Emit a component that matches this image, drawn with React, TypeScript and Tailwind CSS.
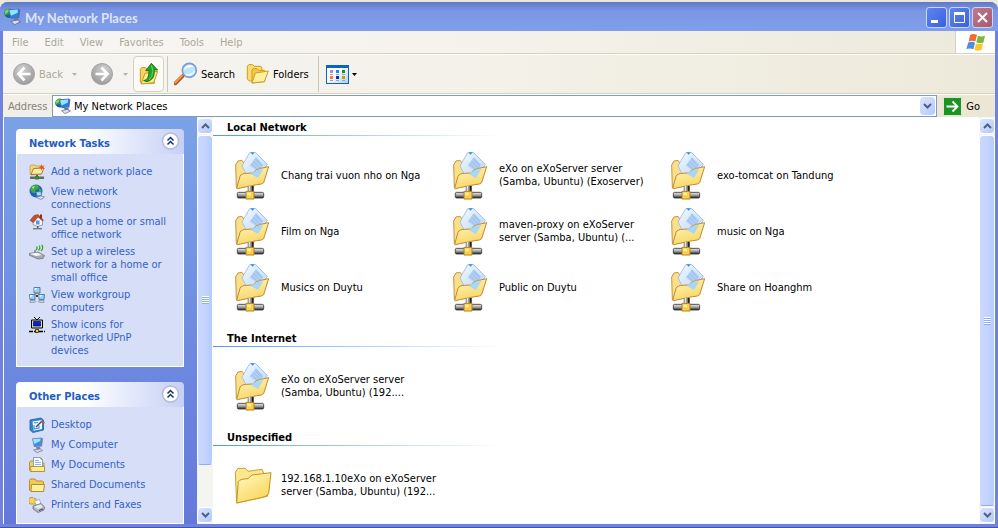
import type { ReactNode } from "react";

/* ---------- small glyphs ---------- */

function NetworkGlobe({ size = 16 }: { size?: number }) {
  return (
    <svg width={size} height={size} viewBox="0 0 16 16" aria-hidden="true">
      <circle cx="4.5" cy="5" r="4.4" fill="#2f9a3c" />
      <path d="M1 3 Q3 1 5 1 L4 4 L1 6Z" fill="#7fd36a" />
      <path d="M1 7 L5 6 L6 9.5 Q3 9.5 1 7Z" fill="#1c55c0" />
      <path d="M4 1.5 L13.5 .6 L15.4 1.6 L14.4 9.4 L6.6 10.2Z" fill="#4f6cb8" />
      <path d="M5 2.2 L13 1.4 L12.8 8.4 L7.2 9.1Z" fill="#1f83f0" />
      <path d="M5 2.2 L13 1.4 L12.9 4.4 L6.6 7.4Z" fill="#8fe4ff" />
      <path d="M9 10 L13 9.5 L14 12 L10 12.6Z" fill="#6e7492" />
      <path d="M6.5 12.6 L12.5 11.4 L15.5 13 L10 15.6Z" fill="#dde2ee" stroke="#5b6480" strokeWidth=".7" />
    </svg>
  );
}

function Circle({ flip }: { flip?: boolean }) {
  return (
    <svg width="24" height="24" viewBox="0 0 24 24" className={flip ? "-scale-x-100" : ""} aria-hidden="true">
      <defs>
        <radialGradient id="disc" cx=".4" cy=".3" r=".8">
          <stop offset="0" stopColor="#d2d2d2" />
          <stop offset="1" stopColor="#949494" />
        </radialGradient>
      </defs>
      <circle cx="12" cy="12" r="10.5" fill="url(#disc)" stroke="#a3a3a3" />
      <path d="M12.5 5.5 L6.5 12 L12.5 18.5 M7 12 H18.5" fill="none" stroke="#fff" strokeWidth="2.6" />
    </svg>
  );
}

function Caret({ color }: { color: string }) {
  return (
    <svg width="5" height="3" viewBox="0 0 5 3" aria-hidden="true">
      <path d="M0 0H5L2.5 3Z" fill={color} />
    </svg>
  );
}

function UpFolder() {
  return (
    <svg width="20" height="24" viewBox="420 186 60 72" aria-hidden="true">
      <path d="M424 208 l4 -5 h12 l4 5 h22 v42 h-38 l-4 -4Z" fill="#f6d568" stroke="#c9981d" strokeWidth="3" />
      <path d="M426 252 L438 220 L476 214 L464 248Z" fill="#ffeb8e" stroke="#c9981d" strokeWidth="3" />
      <path d="M434 242 Q450 240 450 212 H440 L457 190 L476 210 H466 Q468 240 444 245Z" fill="#25a32a" stroke="#0d6a16" strokeWidth="2.5" />
      <path d="M457 196 L462 212 Q460 232 450 240" fill="none" stroke="#6fd45c" strokeWidth="3" />
    </svg>
  );
}

function Magnifier() {
  return (
    <svg width="24" height="24" viewBox="522 188 72 72" aria-hidden="true">
      <path d="M526 252 L548 230" stroke="#b2501a" strokeWidth="11" strokeLinecap="round" />
      <path d="M526 250 L546 229" stroke="#f59a4a" strokeWidth="6" strokeLinecap="round" />
      <circle cx="568" cy="213" r="21" fill="#b9e6fd" stroke="#7b9bd6" strokeWidth="5" />
      <path d="M552 212 Q556 198 572 197 Q580 198 582 204 Q566 200 552 212Z" fill="#fff" />
      <path d="M556 224 Q570 234 584 216" fill="none" stroke="#e6fbff" strokeWidth="5" />
    </svg>
  );
}

function TwoFolders() {
  return (
    <svg width="24" height="22" viewBox="48 102 72 66" aria-hidden="true">
      <path d="M52 112 l4 -5 h12 l5 5 h20 l3 6 v36 l-38 2 l-6 -6Z" fill="#fbdc6c" stroke="#cf9d22" strokeWidth="3" />
      <path d="M66 124 l3 -5 h12 l5 5 h18 v34 l-38 4Z" fill="#f3c84c" stroke="#cf9d22" strokeWidth="3" />
      <path d="M66 162 L76 132 L115 126 L103 158Z" fill="#fff0a0" stroke="#cf9d22" strokeWidth="3" />
    </svg>
  );
}

function ViewsGrid() {
  return (
    <svg width="23" height="19" viewBox="0 0 23 19" aria-hidden="true">
      <defs>
        <linearGradient id="views" x1="0" y1="0" x2="1" y2="1">
          <stop offset=".4" stopColor="#fff" />
          <stop offset="1" stopColor="#a9cdf8" />
        </linearGradient>
      </defs>
      <rect x=".5" y=".5" width="22" height="18" fill="url(#views)" stroke="#0a62d0" />
      <path d="M0 0H23V3H0Z" fill="#0a62d0" />
      <path d="M4 5h3v3H4Z" fill="#9a93cf" />
      <path d="M10 5h3v3h-3Z" fill="#1c86f4" />
      <path d="M16 5h3v3h-3Z" fill="#0a9c0d" />
      <path d="M4 11h3v3H4Z" fill="#fc7744" />
      <path d="M10 11h3v3h-3Z" fill="#0a35a0" />
      <path d="M16 11h3v3h-3Z" fill="#d19b06" />
      <path d="M4 9.5h3M10 9.5h3M16 9.5h3M4 15.5h3M10 15.5h3M16 15.5h3" stroke="#a0a4ae" />
    </svg>
  );
}

function Flag() {
  return (
    <svg width="20" height="19" viewBox="558 97 62 56" aria-hidden="true">
      <path d="M571 102 Q580 96 592 102 L587 122 Q577 117 566 122Z" fill="#ef6a34" />
      <path d="M595 104 Q605 109 617 104 L612 125 Q601 129 590 124Z" fill="#7cb83c" />
      <path d="M565 125 Q576 120 586 126 L581 146 Q571 141 559 145Z" fill="#4a90e0" />
      <path d="M589 128 Q599 132 611 128 L606 148 Q595 153 584 148Z" fill="#fbc62d" />
    </svg>
  );
}

function Chevrons() {
  return (
    <svg width="19" height="19" viewBox="0 0 19 19" aria-hidden="true">
      <circle cx="9.5" cy="9" r="8" fill="#fff" stroke="#b4bbda" strokeWidth="1.5" />
      <path d="M6.5 8.5 L9.5 5.5 L12.5 8.5 M6.5 12.5 L9.5 9.5 L12.5 12.5" fill="none" stroke="#12307e" strokeWidth="1.5" />
    </svg>
  );
}

/* ---------- 16px task icons ---------- */

function Icon16({ children }: { children: ReactNode }) {
  return (
    <svg width="16" height="16" viewBox="0 0 16 16" className="shrink-0" aria-hidden="true">
      {children}
    </svg>
  );
}

const addPlace = (
  <Icon16>
    <path d="M1 2 l1 -1 h4 l1 1 h5 v8 l-10 1 l-1 -1Z" fill="#f6d67a" stroke="#c79a35" strokeWidth=".8" />
    <path d="M2 10.5 L4.5 4.5 L15 4 L12.5 10Z" fill="#ffeaa0" stroke="#8a6a24" strokeWidth=".8" />
    <path d="M12.5 0 L13.3 2 L15.5 1.5 L14.3 3.2 L15.8 5 L13.4 4.6 L12.3 6.4 L11.8 4.3 L9.5 3.6 L11.7 2.6Z" fill="#f0541e" />
    <path d="M7 11h2v2H7Z" fill="#555" />
    <path d="M1 12.5h14v2.5H1Z" fill="#5f6a62" />
    <path d="M6 12h4v3.5H6Z" fill="#2f8a3a" />
  </Icon16>
);

const viewConnections = (
  <Icon16>
    <circle cx="7" cy="7" r="6.5" fill="#1f5fc6" />
    <path d="M3 2 Q7 0 10 2 L9 5 L6 6 L7 9 L4 9 L1 6Z" fill="#3fae3c" />
    <path d="M10 4 L13 6 L12 9 L10 8Z" fill="#3fae3c" />
    <path d="M3 3 L6 2 L4 5Z" fill="#b6f09a" />
    <path d="M7 8 L12 7.5 L12.5 11.5 L8 12Z" fill="#a8dcf8" stroke="#4e6f9c" strokeWidth=".7" />
    <path d="M7 13 L12 12 L15.5 13 L12 15.5Z" fill="#dfe5ee" stroke="#65718a" strokeWidth=".7" />
  </Icon16>
);

const homeNetwork = (
  <Icon16>
    <path d="M4 6 L9 2 L13.5 6.5 V11 L8.5 12.5 L4 10.5Z" fill="#f3f5fb" stroke="#7f8aa8" strokeWidth=".8" />
    <path d="M1 6.5 L5 1.5 L9 .6 L14.5 6 L13.5 7 L9 3 L4.5 8.5Z" fill="#c9502c" stroke="#7e2f1c" strokeWidth=".5" />
    <path d="M11 .5h2v4h-2Z" fill="#8b2f1a" />
    <path d="M7 6.5h3.5v4H7Z" fill="#4a9be6" />
    <path d="M8 12h1.5v2H8Z" fill="#5c5c5c" />
    <path d="M4 14h9v1.4H4Z" fill="#6f7f78" />
  </Icon16>
);

const wireless = (
  <Icon16>
    <path d="M7 6 Q9 4.5 7.5 2.5 M9.5 6.5 Q12 4 10 1.5 M12 7 Q15 4 12.7 .8" fill="none" stroke="#3aa514" strokeWidth="1.2" />
    <path d="M0 9.5 L9 8 L15.5 11.5 L14 14.5 L9 15 L0 11Z" fill="#a6a9b2" stroke="#6c6f78" strokeWidth=".7" />
    <path d="M1 9.8 L8.5 8.7 L13 11 L7 12Z" fill="#f6f7fa" />
    <path d="M6 8V6" stroke="#555" />
  </Icon16>
);

const workgroup = (
  <Icon16>
    <path d="M8 5 L4 10 M8 5 L12 10" stroke="#c58a2a" strokeWidth="1.6" />
    <path d="M5 .5h6v5.5H5Z" fill="#8fd3f5" stroke="#5a7ba4" />
    <path d="M.5 7.5h5.5v5H1Z" fill="#8fd3f5" stroke="#5a7ba4" />
    <path d="M10 7.5h5.5l-.5 5h-5Z" fill="#8fd3f5" stroke="#5a7ba4" />
    <path d="M1 13.5 h5 l1 1 l-2 1 h-4Z M10 13.5 h5 v2 h-4 l-2 -1Z" fill="#c4cbd8" stroke="#7d879c" strokeWidth=".6" />
    <path d="M5.5 1h3L5.5 4Z M1 8h3L1 11Z M10.5 8h3l-3 3Z" fill="#e1f6ff" />
    <path d="M7 8h2v2H7Z" fill="#3b3b3b" />
  </Icon16>
);

const upnp = (
  <Icon16>
    <path d="M5 0 L8 3 L11 0" fill="none" stroke="#000" />
    <path d="M2.5 3h11v8h-11Z" fill="#d6d6d6" stroke="#000" />
    <path d="M4.5 4.5h7v4.5h-7Z" fill="#0c1fe0" stroke="#000" strokeWidth=".6" />
    <path d="M0 14.5h16" stroke="#000" strokeWidth="1.4" strokeDasharray="4 1" />
    <path d="M6.5 12.5h3v3h-3Z" fill="#eadb1a" stroke="#000" strokeWidth=".7" />
  </Icon16>
);

const desktop = (
  <Icon16>
    <path d="M1 3 L12 1 L14.5 3 V13 L4 15.5 L1 13Z" fill="#2f86c8" stroke="#1c5f9c" strokeWidth=".8" />
    <path d="M3.5 4.5 L13 3 V12 L4.5 13.8Z" fill="#f4f9ff" />
    <path d="M5 6 L9 5.5 M5 8 V12 L10 11 V8.5" fill="none" stroke="#3f8fd4" strokeWidth="1.2" />
    <path d="M7 10 L13 4" stroke="#29518c" strokeWidth="1.4" />
    <path d="M12.5 5 L15.5 6" stroke="#e2502a" strokeWidth="2" />
  </Icon16>
);

const computer = (
  <Icon16>
    <path d="M3 1.5 L12 .5 L14 1.5 L13 9.5 L5 10Z" fill="#6f7fb8" />
    <path d="M4 2.2 L11.5 1.5 L11 8.6 L5.6 9Z" fill="#2f93f0" />
    <path d="M4 2.2 L11.5 1.5 L11.3 4 L5.2 7Z" fill="#9ee6ff" />
    <path d="M7 10h4l.5 2.5h-4Z" fill="#7e84a0" />
    <path d="M4.5 13 L11.5 11.8 L13.5 13.5 L8 15.6Z" fill="#d6dae8" stroke="#676e8c" strokeWidth=".7" />
  </Icon16>
);

const myDocuments = (
  <Icon16>
    <path d="M.5 6 l1 -2 h3 v-3.5 h7 l2 2 V6 h1.5 V14.5 H1.5 L.5 13.5Z" fill="#f2cf5c" stroke="#b98c22" strokeWidth=".9" />
    <path d="M4.5 .5h6l3 3V11h-9Z" fill="#f8fbff" stroke="#6f93c8" strokeWidth=".8" />
    <path d="M6 3.5h4M6 5.5h6M6 7.5h6" stroke="#7fb0e8" strokeWidth=".9" />
    <path d="M1.5 9.5h14v5H2Z" fill="#ffeb9a" stroke="#b98c22" strokeWidth=".9" />
  </Icon16>
);

const sharedDocuments = (
  <Icon16>
    <path d="M.5 3.5 l1 -1.5 h4.5 l1.5 2 h6 l1 1 V14 H1.5 L.5 13Z" fill="#f0cb55" stroke="#b98c22" />
    <path d="M2.5 7.5h13l-1 7H2Z" fill="#fff0a4" stroke="#b98c22" />
  </Icon16>
);

const printers = (
  <Icon16>
    <path d="M0 2 l1 -1.5 h3 l1 1 h2 v5.5 H1 L0 6Z" fill="#f6d25c" stroke="#bb8f25" strokeWidth=".8" />
    <path d="M5.5 4 L10.5 2.5 L12.5 8 L8 10Z" fill="#fff" stroke="#9a9fac" strokeWidth=".8" />
    <path d="M4 9 L12 6.5 L15.5 10 L15 13 L9 15.5 L4 12Z" fill="#b4b8c2" stroke="#6e727e" strokeWidth=".8" />
    <path d="M5 9.5 L11.5 7.5 L14 10 L9 12Z" fill="#e6e9ef" />
    <path d="M10 13.5 L14 12" stroke="#3f434c" />
  </Icon16>
);

/* ---------- 48px item icons ---------- */

function NetworkFolder() {
  return (
    <svg width="48" height="50" viewBox="51 105 144 150" className="shrink-0" aria-hidden="true">
      <defs>
        <linearGradient id="flap" x1="0" y1="0" x2=".4" y2="1">
          <stop offset="0" stopColor="#fff6bd" />
          <stop offset="1" stopColor="#f8d768" />
        </linearGradient>
        <linearGradient id="sheet" x1="0" y1="0" x2="1" y2="1">
          <stop offset="0" stopColor="#f4faff" />
          <stop offset="1" stopColor="#b9d6f8" />
        </linearGradient>
        <linearGradient id="pipe" x1="0" y1="0" x2="0" y2="1">
          <stop offset="0" stopColor="#ededed" />
          <stop offset=".5" stopColor="#a4a4a4" />
          <stop offset="1" stopColor="#1f1f1f" />
        </linearGradient>
      </defs>
      <path d="M79 218 L77 150 L84 138 L96 136 L103 146 L118 150 L120 190Z" fill="#fbe08a" stroke="#c8924a" strokeWidth="3" />
      <path d="M96 153 L119 113 H137 L172 148 L158 172 L112 184Z" fill="url(#sheet)" stroke="#93b9ec" strokeWidth="2.5" />
      <path d="M121 112 H134 L128 119Z" fill="#2d8ef2" />
      <path d="M120 151 L138 127 L159 150 L144 172Z" fill="#a3c6f2" />
      <path d="M123 149 l18 20 M128 142 l20 22 M133 135 l20 22" stroke="#c9dff9" strokeWidth="2" />
      <path d="M80 220 L90 184 Q94 175 110 175 L128 174 Q138 162 152 160 L176 155 L161 203 Q158 208 140 209 L82 221Z" fill="url(#flap)" stroke="#c08a30" strokeWidth="3" />
      <path d="M122 177 L140 165 L160 162 L144 189Z" fill="#a9d6f2" />
      <path d="M113 213 H130 V232 H113Z" fill="#7c7c7c" />
      <path d="M116 213 H121 V232 H116Z" fill="#e4e4e4" />
      <path d="M126 213 H131 V232 H126Z" fill="#1f1f1f" />
      <rect x="82" y="232" width="79" height="17" rx="4" fill="url(#pipe)" stroke="#333" strokeWidth="2.5" />
      <path d="M108 229 H132 V252 H108Z" fill="#fbcf48" stroke="#b5821c" strokeWidth="3" />
      <path d="M112 233 H123 V241 H112Z" fill="#fff0a8" />
    </svg>
  );
}

function PlainFolder() {
  return (
    <svg width="48" height="48" viewBox="51 424 144 144" className="shrink-0" aria-hidden="true">
      <defs>
        <linearGradient id="plain" x1="0" y1="0" x2=".7" y2="1">
          <stop offset="0" stopColor="#fff9c4" />
          <stop offset="1" stopColor="#fad65a" />
        </linearGradient>
      </defs>
      <path d="M80 550 L76 458 L84 446 H106 L114 455 L156 449 L162 462 L180 462 L172 530Z" fill="#fce68e" stroke="#cf9f28" strokeWidth="3" />
      <path d="M80 550 L85 486 Q88 478 114 477 L126 466 L183 459 L176 522 Q172 530 148 535Z" fill="url(#plain)" stroke="#c4951f" strokeWidth="3" />
    </svg>
  );
}

/* ---------- pieces ---------- */

function ScrollArrow({ down }: { down?: boolean }) {
  return (
    <button
      type="button"
      aria-label={down ? "Scroll down" : "Scroll up"}
      className="flex h-4 w-full shrink-0 items-center justify-center rounded-sm border border-white bg-linear-to-br from-[#dbe5ff] to-[#b3c8fa]"
    >
      <svg width="9" height="6" viewBox="0 0 9 6" className={down ? "rotate-180" : ""} aria-hidden="true">
        <path d="M1 5 L4.5 1.5 L8 5" fill="none" stroke="#4d6185" strokeWidth="2" />
      </svg>
    </button>
  );
}

function ScrollBar({ thumb }: { thumb: string }) {
  return (
    <div className="flex w-4 shrink-0 flex-col bg-[#f5f5f0] py-px">
      <ScrollArrow />
      <div className="min-h-0 flex-1 py-px">
        <div
          className={`flex w-full flex-col items-center justify-center rounded-sm border border-white border-b-[#8fadf0] bg-linear-to-r from-[#cbd8ff] via-[#c4d4fe] to-[#b4ccfc] ${thumb}`}
        >
          {[0, 1, 2, 3].map((n) => (
            <span key={n} className="h-[2px] w-[7px] border-b border-[#8cb0f8] bg-white" />
          ))}
        </div>
      </div>
      <ScrollArrow down />
    </div>
  );
}

type Task = { icon: ReactNode; lines: string[] };

function Panel({ title, tasks }: { title: string; tasks: Task[] }) {
  return (
    <section>
      <header className="flex h-[25px] items-center justify-between rounded-t bg-linear-to-r from-white from-40% to-[#c6d0f6] pr-1 pl-[13px]">
        <h2 className="pt-[3px] font-bold text-[#215dc6]">{title}</h2>
        <button type="button" aria-label={`Collapse ${title}`}>
          <Chevrons />
        </button>
      </header>
      <ul className="border border-t-0 border-white bg-[#d6dff7] pt-[9px] pb-[7px] pl-3">
        {tasks.map((task) => (
          <li key={task.lines[0]} className="min-h-5 pt-px pb-[2px]">
            <a href="#" className="flex items-start gap-[6px] text-[#3462c8]">
              <span className="h-[13px]">{task.icon}</span>
              <span className="pt-px">
                {task.lines.map((line) => (
                  <span key={line} className="block whitespace-nowrap">
                    {line}
                  </span>
                ))}
              </span>
            </a>
          </li>
        ))}
      </ul>
    </section>
  );
}

function Group({ title, items, plain }: { title: string; items: string[][]; plain?: boolean }) {
  return (
    <section className="pb-[13px]">
      <h2 className="h-[18px] pt-1 pl-[14px] font-bold">{title}</h2>
      <div className="h-px w-72 bg-linear-to-r from-[#4a98f8] to-white" />
      <ul className="grid grid-cols-[repeat(auto-fill,218px)] pt-[11px] pl-[14px]">
        {items.map((lines) => (
          <li key={lines.join(" ")} className="flex h-14 items-center gap-[6px]">
            {plain ? <PlainFolder /> : <NetworkFolder />}
            <span>
              {lines.map((line) => (
                <span key={line} className="block whitespace-nowrap">
                  {line}
                </span>
              ))}
            </span>
          </li>
        ))}
      </ul>
    </section>
  );
}

const networkTasks: Task[] = [
  { icon: addPlace, lines: ["Add a network place"] },
  { icon: viewConnections, lines: ["View network", "connections"] },
  { icon: homeNetwork, lines: ["Set up a home or small", "office network"] },
  { icon: wireless, lines: ["Set up a wireless", "network for a home or", "small office"] },
  { icon: workgroup, lines: ["View workgroup", "computers"] },
  { icon: upnp, lines: ["Show icons for", "networked UPnP", "devices"] },
];

const otherPlaces: Task[] = [
  { icon: desktop, lines: ["Desktop"] },
  { icon: computer, lines: ["My Computer"] },
  { icon: myDocuments, lines: ["My Documents"] },
  { icon: sharedDocuments, lines: ["Shared Documents"] },
  { icon: printers, lines: ["Printers and Faxes"] },
];

const localNetwork = [
  ["Chang trai vuon nho on Nga"],
  ["eXo on eXoServer server", "(Samba, Ubuntu) (Exoserver)"],
  ["exo-tomcat on Tandung"],
  ["Film on Nga"],
  ["maven-proxy on eXoServer", "server (Samba, Ubuntu) (..."],
  ["music on Nga"],
  ["Musics on Duytu"],
  ["Public on Duytu"],
  ["Share on Hoanghm"],
];

const caption = "flex h-[21px] w-[21px] items-center justify-center rounded-[3px] border border-[#c9d6fa]";

export default function App() {
  return (
    <div className="flex h-screen flex-col overflow-hidden bg-[#ece9d8] pt-[2px] font-['DejaVu_Sans_Condensed','DejaVu_Sans',sans-serif] text-[11px] leading-[13px] text-black">
      <div className="flex min-h-0 flex-1 flex-col rounded-t-lg border-b border-[#4552b4] bg-[#6f82dc]">
        {/* title bar */}
        <header className="flex h-[29px] shrink-0 items-center gap-1 rounded-t-lg bg-linear-to-b from-[#6078cc] via-[#7b96e2] via-30% to-[#7f9fec] pr-[5px] pl-1">
          <NetworkGlobe size={17} />
          <h1 className="flex-1 pt-[3px] font-['Lato','Open_Sans',sans-serif] text-[13px] leading-4 font-bold text-[#dce5fb]">
            My Network Places
          </h1>
          <div className="flex gap-[2px] pt-[2px]">
            <button type="button" aria-label="Minimize" className={`${caption} bg-linear-to-br from-[#5f86ee] to-[#3a5fe0]`}>
              <svg width="15" height="15" viewBox="0 0 15 15" aria-hidden="true">
                <path d="M2 10h7v3H2Z" fill="#fff" />
              </svg>
            </button>
            <button type="button" aria-label="Maximize" className={`${caption} bg-linear-to-br from-[#5f86ee] to-[#3a5fe0]`}>
              <svg width="15" height="15" viewBox="0 0 15 15" aria-hidden="true">
                <path d="M2.5 3h10v9.5h-10Z" fill="none" stroke="#fff" />
                <path d="M2 2h11v3H2Z" fill="#fff" />
              </svg>
            </button>
            <button type="button" aria-label="Close" className={`${caption} bg-linear-to-br from-[#c07a8c] to-[#a35a70]`}>
              <svg width="15" height="15" viewBox="0 0 15 15" aria-hidden="true">
                <path d="M3 3 L12 12 M12 3 L3 12" stroke="#fff" strokeWidth="2" />
              </svg>
            </button>
          </div>
        </header>

        <div className="mx-[3px] mb-[3px] flex min-h-0 flex-1 flex-col">
          {/* menu bar */}
          <nav className="flex h-[23px] shrink-0 border-b border-[#d8d2bd] bg-linear-to-r from-[#f8f6f5] via-[#f4f2ea] via-50% to-[#ece9dc] text-[#aca899]">
            <ul className="flex flex-1 items-center gap-4 pl-[9px]">
              {["File", "Edit", "View", "Favorites", "Tools", "Help"].map((item) => (
                <li key={item}>
                  <button type="button">{item}</button>
                </li>
              ))}
            </ul>
            <div className="flex w-10 items-center justify-center border-l border-[#d8d2bd] bg-white">
              <Flag />
            </div>
          </nav>

          {/* toolbar */}
          <div className="flex h-10 shrink-0 items-center border-t border-b border-t-white border-b-[#d8d2bd] bg-linear-to-r from-[#f6f4f2] via-[#f3f1e8] via-50% to-[#ede9da]">
            <button type="button" className="flex items-center gap-[3px] pl-[9px] text-[#aca899]">
              <Circle />
              Back
            </button>
            <button type="button" aria-label="Back history" className="pl-[9px]">
              <Caret color="#b8b5a8" />
            </button>
            <button type="button" aria-label="Forward" className="pl-[13px]">
              <Circle flip />
            </button>
            <button type="button" aria-label="Forward history" className="pl-[9px]">
              <Caret color="#b8b5a8" />
            </button>
            <button
              type="button"
              aria-label="Up"
              className="ml-[5px] flex h-9 w-[31px] items-center justify-center rounded border border-[#d4d0c2] bg-[#fbfaf7]"
            >
              <UpFolder />
            </button>
            <span className="mx-[3px] h-9 w-px bg-[#ccc8b6]" />
            <button type="button" className="flex items-center gap-[3px] pl-[3px]">
              <Magnifier />
              Search
            </button>
            <button type="button" className="flex items-center gap-[3px] pl-[11px]">
              <TwoFolders />
              Folders
            </button>
            <span className="mr-[7px] ml-[9px] h-9 w-px bg-[#ccc8b6]" />
            <button type="button" aria-label="Views" className="flex items-center gap-[3px]">
              <ViewsGrid />
              <Caret color="#000" />
            </button>
          </div>

          {/* address bar */}
          <div className="flex h-[23px] shrink-0 items-center border-t border-white bg-linear-to-r from-[#f1efe8] to-[#ece7d4]">
            <label htmlFor="address" className="w-[49px] pl-[5px] text-[#85827a]">
              Address
            </label>
            <div className="flex h-[22px] min-w-0 flex-1 items-center border border-[#7f9db9] bg-white pr-px pl-[2px]">
              <NetworkGlobe size={16} />
              <input id="address" type="text" defaultValue="My Network Places" className="min-w-0 flex-1 pt-px pl-[3px] outline-none" />
              <button
                type="button"
                aria-label="Show addresses"
                className="flex h-[18px] w-[15px] items-center justify-center rounded-sm bg-linear-to-br from-[#dbe5ff] to-[#b3c8fa]"
              >
                <svg width="9" height="6" viewBox="0 0 9 6" aria-hidden="true">
                  <path d="M1 1 L4.5 4.5 L8 1" fill="none" stroke="#4d6185" strokeWidth="2" />
                </svg>
              </button>
            </div>
            <button type="button" className="flex items-center gap-1 pr-[15px] pl-[6px]">
              <svg width="19" height="19" viewBox="0 0 19 19" aria-hidden="true">
                <rect x=".5" y=".5" width="18" height="18" rx="1" fill="#1c9424" stroke="#dcead2" />
                <path d="M3.5 9.5H14 M9.5 4.5 L14.5 9.5 L9.5 14.5" fill="none" stroke="#fff" strokeWidth="1.8" />
              </svg>
              Go
            </button>
          </div>

          {/* contents */}
          <div className="flex min-h-0 flex-1 border-l border-white">
            <aside className="flex w-[193px] shrink-0 flex-col gap-[15px] overflow-hidden bg-linear-to-b from-[#7ba2e7] to-[#6478da] pt-3 pr-[13px] pl-3">
              <Panel title="Network Tasks" tasks={networkTasks} />
              <Panel title="Other Places" tasks={otherPlaces} />
            </aside>
            <ScrollBar thumb="h-[89%]" />
            <main className="min-w-0 flex-1 overflow-hidden bg-white">
              <Group title="Local Network" items={localNetwork} />
              <Group title="The Internet" items={[["eXo on eXoServer server", "(Samba, Ubuntu) (192...."]]} />
              <Group
                title="Unspecified"
                plain
                items={[["192.168.1.10eXo on eXoServer", "server (Samba, Ubuntu) (192..."]]}
              />
            </main>
            <ScrollBar thumb="h-full" />
          </div>
        </div>
      </div>
    </div>
  );
}
